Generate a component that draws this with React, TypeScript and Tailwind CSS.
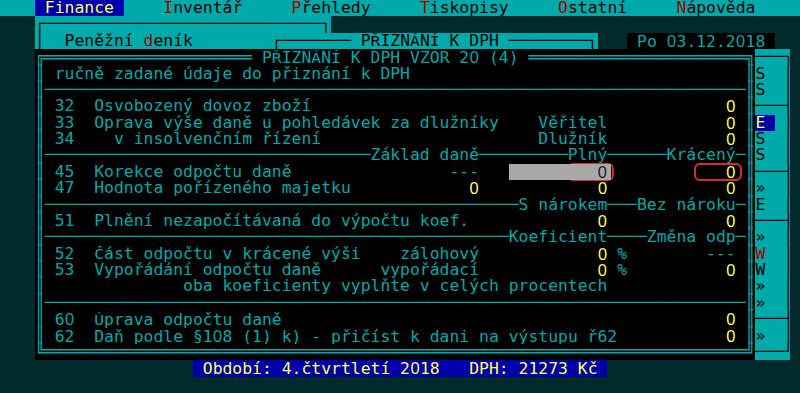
import clsx from 'clsx'

type Fg = 'cyan' | 'black' | 'yellow' | 'red' | 'ink'
type Bg = 'desk' | 'cyan' | 'edge' | 'black' | 'blue' | 'gray'
type Cell = { ch: string; fg: Fg; bg: Bg }
type Run = { text: string; fg: Fg; bg: Bg }

const FG: Record<Fg, string> = {
  cyan: 'text-[#00aaaa]',
  black: 'text-black',
  yellow: 'text-[#ffff55]',
  red: 'text-[#aa0000]',
  ink: 'text-[#1c1c1c]',
}

const BG: Record<Bg, string> = {
  desk: '',
  cyan: 'bg-[#00aaaa]',
  // last column of the side panel is only half shown
  edge: 'bg-[#00aaaa] w-[4.6px] overflow-hidden',
  black: 'bg-black',
  blue: 'bg-[#0000aa]',
  gray: 'bg-[#a9a9a9] pr-[4px] -mr-[4px] relative z-10',
}

const COLS = 80
const ROWS = 24

// text screen 80x24, windows painted back to front
const buildScreen = () => {
  const s: Cell[][] = Array.from({ length: ROWS }, () =>
    Array.from({ length: COLS }, () => ({ ch: ' ', fg: 'cyan' as Fg, bg: 'desk' as Bg }))
  )

  const put = (r: number, c: number, text: string, fg: Fg, bg?: Bg) => {
    Array.from(text).forEach((ch, i) => {
      const cell = s[r]?.[c + i]
      if (!cell) return
      cell.ch = ch
      cell.fg = fg
      if (bg) cell.bg = bg
    })
  }

  const fill = (r0: number, c0: number, r1: number, c1: number, fg: Fg, bg: Bg) => {
    for (let r = r0; r <= r1; r++)
      for (let c = c0; c <= c1; c++) s[r][c] = { ch: ' ', fg, bg }
  }

  // menu bar
  fill(0, 0, 0, 79, 'black', 'cyan')
  put(0, 3, ' Finance ', 'yellow', 'blue')
  const menu: [number, string][] = [
    [16, 'Inventář'],
    [29, 'Přehledy'],
    [42, 'Tiskopisy'],
    [56, 'Ostatní'],
    [68, 'Nápověda'],
  ]
  menu.forEach(([c, t]) => {
    put(0, c, t[0], 'red')
    put(0, c + 1, t.slice(1), 'black')
  })

  // Peněžní deník window
  fill(1, 3, 2, 32, 'black', 'cyan')
  put(1, 3, '┌' + '─'.repeat(28) + '┐', 'black')
  put(2, 3, '│', 'black')
  put(2, 6, 'Peněžní ', 'black')
  put(2, 14, 'd', 'red')
  put(2, 15, 'eník', 'black')

  // PŘIZNÁNÍ K DPH window
  fill(2, 27, 2, 59, 'black', 'cyan')
  put(2, 27, '┌' + '─'.repeat(7) + ' PŘIZNÁNÍ K DPH ' + '─'.repeat(8) + '┐', 'black')

  // date
  put(2, 63, ' Po 03.12.2018 ', 'cyan', 'black')

  // right side panel
  fill(3, 76, 21, 78, 'black', 'cyan')
  fill(3, 79, 21, 79, 'black', 'edge')
  put(3, 76, '───┐', 'black')
  for (let r = 4; r <= 20; r++) put(r, 79, '│', 'black')
  ;[6, 10, 13, 19].forEach((r) => put(r, 76, '───┤', 'black'))
  put(21, 76, '───┘', 'black')
  put(4, 76, 'S', 'black')
  put(5, 76, 'S', 'black')
  put(7, 76, 'E ', 'yellow', 'blue')
  put(8, 76, 'S', 'black')
  put(9, 76, 'S', 'black')
  put(11, 76, '»', 'black')
  put(12, 76, 'E', 'black')
  put(14, 76, '»', 'black')
  put(15, 76, 'W', 'red')
  put(16, 76, 'W', 'black')
  put(17, 76, '»', 'black')
  put(18, 76, '»', 'black')
  put(20, 76, '»', 'black')

  // dialog
  fill(3, 3, 21, 75, 'cyan', 'black')
  put(3, 3, '╔' + '═'.repeat(71) + '╗', 'cyan')
  for (let r = 4; r <= 20; r++) {
    put(r, 3, '║', 'cyan')
    put(r, 75, '║', 'cyan')
  }
  put(21, 3, '╚' + '═'.repeat(71) + '╝', 'cyan')
  put(3, 25, ' PŘIZNÁNÍ K DPH VZOR 20 (4) ', 'cyan')

  const sep = (r: number, labels: [number, string][] = []) => {
    put(r, 4, '─'.repeat(71), 'cyan')
    labels.forEach(([c, t]) => put(r, c, t, 'cyan'))
  }
  const line = (r: number, num: string, text: string) => {
    put(r, 5, num, 'cyan')
    put(r, 9, text, 'cyan')
  }
  const zero = (r: number, c: number) => put(r, c, '0', 'yellow')

  put(4, 5, 'ručně zadané údaje do přiznání k DPH', 'cyan')
  sep(5)

  line(6, '32', 'Osvobozený dovoz zboží')
  zero(6, 73)
  line(7, '33', 'Oprava výše daně u pohledávek za dlužníky')
  put(7, 54, 'Věřitel', 'cyan')
  zero(7, 73)
  put(8, 5, '34', 'cyan')
  put(8, 11, 'v insolvenčním řízení', 'cyan')
  put(8, 54, 'Dlužník', 'cyan')
  zero(8, 73)

  sep(9, [
    [37, 'Základ daně'],
    [57, 'Plný'],
    [67, 'Krácený'],
  ])
  line(10, '45', 'Korekce odpočtu daně')
  put(10, 45, '---', 'cyan')
  put(10, 51, '         0', 'ink', 'gray')
  zero(10, 73)
  line(11, '47', 'Hodnota pořízeného majetku')
  zero(11, 47)
  zero(11, 60)
  zero(11, 73)

  sep(12, [
    [52, 'S nárokem'],
    [64, 'Bez nároku'],
  ])
  line(13, '51', 'Plnění nezapočítávaná do výpočtu koef.')
  zero(13, 60)
  zero(13, 73)

  sep(14, [
    [51, 'Koeficient'],
    [65, 'Změna odp'],
  ])
  line(15, '52', 'Část odpočtu v krácené výši')
  put(15, 40, 'zálohový', 'cyan')
  zero(15, 60)
  put(15, 62, '%', 'cyan')
  put(15, 71, '---', 'cyan')
  line(16, '53', 'Vypořádání odpočtu daně')
  put(16, 38, 'vypořádací', 'cyan')
  zero(16, 60)
  put(16, 62, '%', 'cyan')
  zero(16, 73)
  put(17, 18, 'oba koeficienty vyplňte v celých procentech', 'cyan')

  sep(18)
  line(19, '60', 'Úprava odpočtu daně')
  zero(19, 73)
  line(20, '62', 'Daň podle §108 (1) k) - přičíst k dani na výstupu ř62')
  zero(20, 73)

  // status line
  put(22, 19, ' Období: 4.čtvrtletí 2018   DPH: 21273 Kč ', 'yellow', 'blue')

  return s
}

const toRuns = (row: Cell[]) =>
  row.reduce<Run[]>((acc, cell) => {
    const last = acc[acc.length - 1]
    if (last && last.fg === cell.fg && last.bg === cell.bg) last.text += cell.ch
    else acc.push({ text: cell.ch, fg: cell.fg, bg: cell.bg })
    return acc
  }, [])

// screen font: plain zero, accented capitals squeezed into the cell
const renderText = (text: string) =>
  text.split(/(0|[ŘÁÍÚÉĚŠČŽÝŮĎŤŇÓ])/).map((part, i) => {
    if (part === '0')
      return (
        <span key={i} className="inline-block w-[9.875px] text-center font-['Liberation_Sans',sans-serif]">
          0
        </span>
      )
    if (part.length === 1 && /[ŘÁÍÚÉĚŠČŽÝŮĎŤŇÓ]/.test(part))
      return (
        <span key={i} className="inline-block origin-[50%_85%] scale-y-[0.86]">
          {part}
        </span>
      )
    return part
  })

const screen = buildScreen()

const App = () => {
  return (
    <div className="relative h-[393px] w-[800px] overflow-hidden bg-[#022a2a] font-['DejaVu_Sans_Mono',monospace] text-[16.4px] leading-[16.375px]">
      {screen.map((row, r) => (
        <div
          key={r}
          className={clsx('flex h-[16.375px] whitespace-pre pl-[5.4px]', r === 0 && 'bg-[#00aaaa]')}
        >
          {toRuns(row).map((run, i) => (
            <span key={i} className={clsx('h-[16.375px] shrink-0', FG[run.fg], BG[run.bg])}>
              {run.bg === 'edge' ? (
                <span className="relative -left-[1.4px]">{run.text}</span>
              ) : (
                renderText(run.text)
              )}
            </span>
          ))}
        </div>
      ))}

      {/* red marks drawn over the screenshot */}
      <div className="absolute left-[567px] top-[163px] h-[18px] w-[47px] rounded-[6px] border-2 border-[#e02828]" />
      <div className="absolute left-[694px] top-[163px] h-[18px] w-[48px] rounded-[6px] border-2 border-[#e02828]" />
    </div>
  )
}

export default App
